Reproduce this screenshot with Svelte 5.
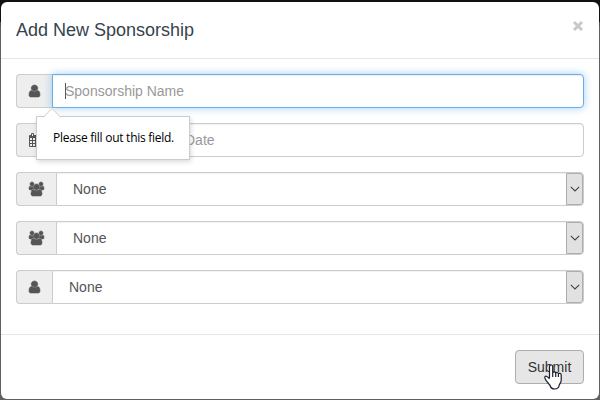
<script>
  const userPath = 'M1536 1399q0 109-62.5 187t-150.5 78h-854q-88 0-150.5-78t-62.5-187q0-85 8.5-160.5t31.5-152 58.5-131 94-89 134.5-34.5q131 128 313 128t313-128q76 0 134.5 34.5t94 89 58.5 131 31.5 152 8.5 160.5zm-256-887q0 159-112.5 271.5t-271.5 112.5-271.5-112.5-112.5-271.5 112.5-271.5 271.5-112.5 271.5 112.5 112.5 271.5z';
  const groupPath = 'M593 896q-162 5-265 128h-134q-82 0-138-40.5t-56-118.5q0-353 124-353 6 0 43.5 21t97.5 42.5 119 21.5q67 0 133-23-5 37-5 66 0 139 81 256zm1071 637q0 120-73 189.5t-194 69.5h-874q-121 0-194-69.5t-73-189.5q0-53 3.5-103.5t14-109 26.5-108.5 43-97.5 62-81 85.5-53.5 111.5-20q10 0 43 21.5t73 48 107 48 135 21.5 135-21.5 107-48 73-48 43-21.5q61 0 111.5 20t85.5 53.5 62 81 43 97.5 26.5 108.5 14 109 3.5 103.5zm-1024-1277q0 106-75 181t-181 75-181-75-75-181 75-181 181-75 181 75 75 181zm704 384q0 159-112.5 271.5t-271.5 112.5-271.5-112.5-112.5-271.5 112.5-271.5 271.5-112.5 271.5 112.5 112.5 271.5zm576 225q0 78-56 118.5t-138 40.5h-134q-103-123-265-128 81-117 81-256 0-29-5-66 66 23 133 23 59 0 119-21.5t97.5-42.5 43.5-21q124 0 124 353zm-128-609q0 106-75 181t-181 75-181-75-75-181 75-181 181-75 181 75 75 181z';
  const selects = ['group', 'group', 'user'];
</script>

{#snippet icon(kind)}
  {#if kind === 'user'}
    <svg class="bold" width="11" height="14" viewBox="256 0 1280 1792" preserveAspectRatio="none"><path d={userPath} /></svg>
  {:else if kind === 'group'}
    <svg class="bold" width="15" height="14" viewBox="0 0 1920 1792"><path d={groupPath} /></svg>
  {:else}
    <svg width="13" height="14" viewBox="0 0 13 14">
      <path fill-rule="evenodd" d="M1 2h1v-.8Q2 0 3.200 0h.6Q5 0 5 1.200V2h3v-.8Q8 0 9.200 0h.6Q11 0 11 1.200V2h1q1 0 1 1v10q0 1-1 1H1q-1 0-1-1V3q0-1 1-1zM1 5v2h2V5zM4 5v2h2V5zM7 5v2h2V5zM10 5v2h2V5zM1 8v2h2V8zM4 8v2h2V8zM7 8v2h2V8zM10 8v2h2V8zM1 11v2h2v-2zM4 11v2h2v-2zM7 11v2h2v-2zM10 11v2h2v-2zM3 1v2h1V1zM9 1v2h1V1z" />
    </svg>
  {/if}
{/snippet}

<div class="backdrop">
  <div class="modal">
    <header>
      <h4>Add New Sponsorship</h4>
      <button class="close" aria-label="Close">
        <svg width="12" height="12" viewBox="0 0 12 12"><path d="M2 2l8 8M10 2l-8 8" /></svg>
      </button>
    </header>

    <div class="body">
      <div class="row">
        <span class="addon">{@render icon('user')}</span>
        <div class="field focus"><i class="caret"></i>Sponsorship Name</div>
        <div class="tip">
          <svg class="arrow" width="20" height="11" viewBox="0 0 20 11"><path d="M1 10.500L10 1.500l9 9V11H1z" /><path class="edge" d="M1 10.500L10 1.500l9 9" /></svg>
          Please fill out this field.
        </div>
      </div>
      <div class="row">
        <span class="addon">{@render icon('calendar')}</span>
        <div class="field date">Date</div>
      </div>
      {#each selects as kind}
        <div class="row">
          <span class="addon">{@render icon(kind)}</span>
          <div class="field select">
            <span>None</span>
            <b class="drop"><svg width="10" height="6" viewBox="0 0 10 6"><path d="M.8 .8L5 5 9.200 .8" /></svg></b>
          </div>
        </div>
      {/each}
    </div>

    <footer>
      <button class="submit">
        Submit
        <svg class="hand" width="18" height="26" viewBox="0 0 18 26">
          <path d="M5.500 14V2.700C5.500.4 8.700.4 8.700 2.700V9c.2-1.600 3-1.500 3 .4.3-1.400 2.700-1.200 2.700.6.400-1 2.800-.8 2.800 1v5.200c0 2-.8 2.800-1.900 4.600-.3 3-2 4.200-4.600 4.200-2.600 0-4.100-1.200-4.600-3.500L2.200 16.700C1 14.600.2 13.400 1 12.600c.8-.8 2.600-.4 4.500 2.400M8.700 9v4M11.700 9.500V13M14.400 10.500V13" />
        </svg>
      </button>
    </footer>
  </div>
</div>

<style>
  .backdrop {
    box-sizing: border-box;
    width: 600px;
    height: 400px;
    padding: 2px 1px 1px;
    background: linear-gradient(#111 0 22px, #4e4e4e 22px 26px, #606060 26px);
    font-family: "Liberation Sans", Arial, sans-serif;
    font-size: 14px;
    color: #555;
    overflow: hidden;
  }
  .modal {
    display: flex;
    flex-direction: column;
    height: 397px;
    border-radius: 6px;
    background: #fff;
  }
  header {
    box-sizing: border-box;
    display: flex;
    justify-content: space-between;
    height: 57px;
    padding: 15px 15px 0;
    border-bottom: 1px solid #e5e5e5;
  }
  h4 {
    margin: 0;
    padding-top: 3px;
    font-size: 18px;
    font-weight: 400;
    line-height: 20px;
    color: #35434d;
  }
  .close {
    display: block;
    width: 12px;
    height: 12px;
    margin-top: 3px;
    padding: 0;
    border: 0;
    background: none;
  }
  .close svg { display: block; }
  .close path { fill: none; stroke: #c8c8c8; stroke-width: 3; }
  .body {
    display: flex;
    flex: 1;
    flex-direction: column;
    gap: 15px;
    padding: 15px 15px 0;
  }
  .row {
    position: relative;
    display: flex;
    height: 34px;
  }
  .addon {
    box-sizing: border-box;
    display: flex;
    align-items: center;
    padding: 0 12px;
    border: 1px solid #ccc;
    border-right: 0;
    border-radius: 4px 0 0 4px;
    background: #eee;
  }
  .addon svg { display: block; fill: #555; overflow: visible; }
  .addon .bold { stroke: #555; stroke-width: 70; }
  .field {
    box-sizing: border-box;
    display: flex;
    align-items: center;
    flex: 1;
    padding: 0 12px;
    border: 1px solid #ccc;
    border-radius: 0 4px 4px 0;
    background: #fff;
    color: #999;
    box-shadow: inset 0 1px 1px rgba(0, 0, 0, .06);
  }
  .focus {
    border-color: #66afe9;
    box-shadow: inset 0 1px 1px rgba(0, 0, 0, .06), 0 0 8px rgba(102, 175, 233, .6);
  }
  .caret {
    width: 1px;
    height: 16px;
    margin-right: -1px;
    background: #555;
  }
  .date { padding-left: 130px; }
  .select {
    justify-content: space-between;
    padding: 0 0 0 16px;
    color: #555;
  }
  .drop {
    box-sizing: border-box;
    display: flex;
    align-items: center;
    justify-content: center;
    width: 17px;
    height: 32px;
    border: 1px solid #adadad;
    border-radius: 0 3px 3px 0;
    background: #e1e1e1;
  }
  .drop path { fill: none; stroke: #444; stroke-width: 1.1; }
  .tip {
    position: absolute;
    z-index: 2;
    top: 42px;
    left: 20px;
    box-sizing: border-box;
    width: 154px;
    height: 44px;
    padding-left: 16px;
    border: 1px solid #ccc;
    background: #fff;
    box-shadow: 1px 2px 5px rgba(0, 0, 0, .15);
    color: #000;
    font: 12px/41px "Open Sans", "Noto Sans", sans-serif;
    letter-spacing: -.27px;
    white-space: nowrap;
  }
  .arrow { position: absolute; top: -10px; left: 5px; }
  .arrow path { fill: #fff; }
  .arrow .edge { fill: none; stroke: #ccc; }
  footer {
    box-sizing: border-box;
    display: flex;
    justify-content: flex-end;
    height: 65px;
    padding: 15px 15px 0;
    border-top: 1px solid #e5e5e5;
  }
  .submit {
    position: relative;
    box-sizing: border-box;
    width: 69px;
    height: 34px;
    padding: 0;
    border: 1px solid #adadad;
    border-radius: 4px;
    background: #e6e6e6;
    color: #333;
    font: 14px "Liberation Sans", Arial, sans-serif;
  }
  .hand { position: absolute; top: 13px; left: 28px; }
  .hand path { fill: #fff; stroke: #1c1c30; stroke-width: 1.2; stroke-linejoin: round; }
</style>
